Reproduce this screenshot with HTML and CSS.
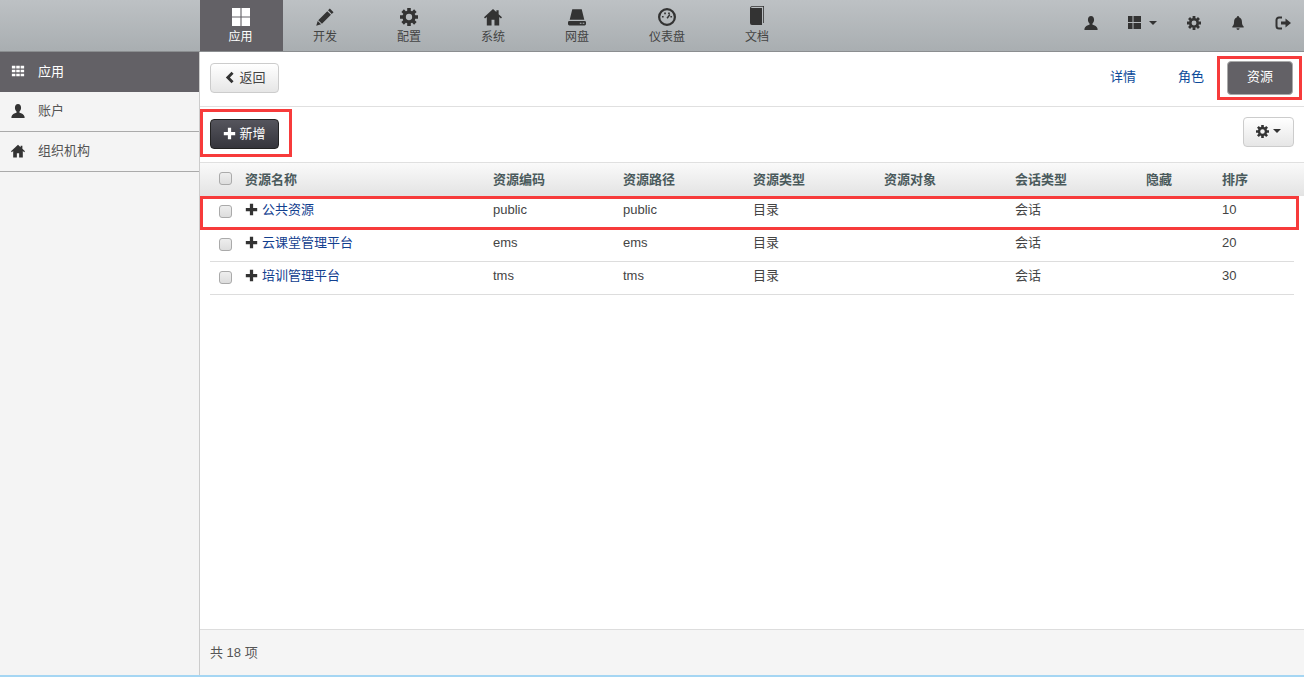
FILE: index.html
```html
<!DOCTYPE html>
<html lang="zh-CN">
<head>
    <meta charset="UTF-8">
    <title>资源</title>
    <link rel="stylesheet" href="styles.css">
</head>
<body>
    <!-- icon sprites -->
    <svg class="sprites">
        <symbol id="i-grid4" viewBox="0 0 16 16"><path d="M0 0h7.500v7.500H0zM8.500 0H16v7.500H8.500zM0 8.500h7.500V16H0zM8.500 8.500H16V16H8.500z"/></symbol>
        <symbol id="i-panels" viewBox="0 0 13 13"><path d="M0 0h4.500v6H0zM0 7h4.500v6H0zM5.500 0H13v6H5.500zM5.500 7H13v6H5.500z"/></symbol>
        <symbol id="i-grid9" viewBox="0 0 16 16"><path d="M1 2h4v3H1zM6 2h4v3H6zM11 2h4v3h-4zM1 6.500h4v3H1zM6 6.500h4v3H6zM11 6.500h4v3h-4zM1 11h4v3H1zM6 11h4v3H6zM11 11h4v3h-4z"/></symbol>
        <symbol id="i-pencil" viewBox="0 0 16 16"><path d="M12.300.4l3.300 3.300-1.600 1.600-3.300-3.300zM10 2.800l3.300 3.300-8 8L2 10.800zM1.500 11.500l3 3L.2 15.800z"/></symbol>
        <symbol id="i-gear" viewBox="0 0 16 16">
            <circle cx="8" cy="8" r="4.300" fill="none" stroke="currentColor" stroke-width="3"/>
            <path d="M6.400 0h3.200v3H6.400zM6.400 13h3.200v3H6.400zM0 6.400h3v3.200H0zM13 6.400h3v3.200h-3z"/>
            <path transform="rotate(45 8 8)" d="M6.400 0h3.200v3H6.400zM6.400 13h3.200v3H6.400zM0 6.400h3v3.200H0zM13 6.400h3v3.200h-3z"/>
        </symbol>
        <symbol id="i-home" viewBox="0 0 16 16"><path d="M8 .8L0 8.300l.9 1 1.600-1.400V15.500h4.200V10.500h2.600v5h4.200V7.900l1.600 1.400.9-1-3-2.800V2h-2v1.600z"/></symbol>
        <symbol id="i-hdd" viewBox="0 0 16 16"><path d="M3.800 1h8.400l2.300 9.500h-13zM1.200 11.500h13.600a1.200 1.200 0 0 1 1.200 1.200v1.600a1.200 1.200 0 0 1-1.200 1.200H1.200A1.200 1.200 0 0 1 0 14.300v-1.600a1.200 1.200 0 0 1 1.200-1.200zM10.500 13v1h1.500v-1zM13 13v1h1.500v-1z" fill-rule="evenodd"/></symbol>
        <symbol id="i-dash" viewBox="0 0 16 16">
            <circle cx="8" cy="8" r="7" fill="none" stroke="currentColor" stroke-width="2"/>
            <path d="M3.500 7h1.500v1.500H3.500zM5.500 4h1.500v1.500H5.500zM9 4h1.500v1.500H9zM11 7h1.500v1.500H11zM10 5.500l1 .7-2.300 3.300-1.200-.8z"/>
        </symbol>
        <symbol id="i-book" viewBox="0 0 16 20"><path d="M1 3.500A2.500 2.500 0 0 1 3.500 1H15v17h-.8V1.800H3.500A1.700 1.700 0 0 0 2 3H13v17H3a2 2 0 0 1-2-2z"/></symbol>
        <symbol id="i-user" viewBox="0 0 16 16"><path d="M8 0c2.200 0 3.500 1.800 3.500 4.200 0 1.900-.9 3.400-1.800 4.300v1.500c2.500.8 5.300 1.700 5.800 4.500V16H.5v-1.500c.5-2.800 3.300-3.700 5.800-4.500V8.500C5.400 7.600 4.500 6.100 4.500 4.200 4.500 1.800 5.800 0 8 0z"/></symbol>
        <symbol id="i-bell" viewBox="0 0 16 16"><path d="M8 0a1.200 1.200 0 0 1 1.200 1.300C11.500 2 12.500 4 12.500 6.500c0 3 .8 4.500 2 5.500v1h-13v-1c1.200-1 2-2.500 2-5.500C3.500 4 4.500 2 6.800 1.300A1.200 1.200 0 0 1 8 0zM6.300 14h3.400A1.800 1.800 0 0 1 8 16a1.800 1.800 0 0 1-1.700-2z"/></symbol>
        <symbol id="i-logout" viewBox="0 0 16 16">
            <path d="M7 2.500H4a2.500 2.500 0 0 0-2.500 2.500v6A2.500 2.500 0 0 0 4 13.500h3" fill="none" stroke="currentColor" stroke-width="2"/>
            <path d="M6 6.500h4.500v-3L16 8l-5.500 4.500v-3H6z"/>
        </symbol>
        <symbol id="i-plus" viewBox="0 0 16 16"><path d="M6 1h4v5h5v4h-5v5H6v-5H1V6h5z"/></symbol>
        <symbol id="i-back" viewBox="0 0 16 16"><path d="M10.500 1l2.500 2.500L8.500 8l4.500 4.500-2.500 2.500-7-7z"/></symbol>
    </svg>

    <header class="topbar">
        <nav class="topnav">
            <a class="topnav-item active"><svg class="nav-icon"><use href="#i-grid4"/></svg>应用</a>
            <a class="topnav-item"><svg class="nav-icon"><use href="#i-pencil"/></svg>开发</a>
            <a class="topnav-item"><svg class="nav-icon"><use href="#i-gear"/></svg>配置</a>
            <a class="topnav-item"><svg class="nav-icon"><use href="#i-home"/></svg>系统</a>
            <a class="topnav-item"><svg class="nav-icon"><use href="#i-hdd"/></svg>网盘</a>
            <a class="topnav-item"><svg class="nav-icon"><use href="#i-dash"/></svg>仪表盘</a>
            <a class="topnav-item"><svg class="nav-icon book"><use href="#i-book"/></svg>文档</a>
        </nav>
        <div class="topbar-right">
            <svg class="tool-icon"><use href="#i-user"/></svg>
            <span class="tool-group"><svg class="tool-icon"><use href="#i-panels"/></svg><i class="caret"></i></span>
            <svg class="tool-icon"><use href="#i-gear"/></svg>
            <svg class="tool-icon"><use href="#i-bell"/></svg>
            <svg class="tool-icon wide"><use href="#i-logout"/></svg>
        </div>
    </header>

    <div class="layout">
        <aside class="sidebar">
            <a class="side-item active"><svg class="side-icon"><use href="#i-grid9"/></svg><span class="cn">应用</span></a>
            <a class="side-item"><svg class="side-icon"><use href="#i-user"/></svg><span class="cn">账户</span></a>
            <a class="side-item"><svg class="side-icon"><use href="#i-home"/></svg><span class="cn">组织机构</span></a>
        </aside>

        <main class="content">
            <div class="toolbar-top">
                <button class="btn"><svg class="btn-icon"><use href="#i-back"/></svg><span class="cn">返回</span></button>
                <div class="tabs">
                    <a class="tab">详情</a>
                    <a class="tab">角色</a>
                    <a class="tab active">资源</a>
                    <span class="mark mark-tab"></span>
                </div>
            </div>

            <div class="toolbar-actions">
                <button class="btn btn-dark"><svg class="btn-icon"><use href="#i-plus"/></svg><span class="cn">新增</span></button>
                <span class="mark mark-add"></span>
                <button class="btn btn-gear"><svg class="btn-icon"><use href="#i-gear"/></svg><i class="caret"></i></button>
            </div>

            <div class="table">
                <div class="row head">
                    <span><input type="checkbox" class="check"></span>
                    <span>资源名称</span>
                    <span>资源编码</span>
                    <span>资源路径</span>
                    <span>资源类型</span>
                    <span>资源对象</span>
                    <span>会话类型</span>
                    <span>隐藏</span>
                    <span>排序</span>
                </div>
                <div class="row">
                    <span><input type="checkbox" class="check"></span>
                    <span class="name"><svg class="row-icon"><use href="#i-plus"/></svg><a class="cn">公共资源</a></span>
                    <span>public</span>
                    <span>public</span>
                    <span class="cn">目录</span>
                    <span></span>
                    <span class="cn">会话</span>
                    <span></span>
                    <span>10</span>
                    <span class="mark mark-row"></span>
                </div>
                <div class="row">
                    <span><input type="checkbox" class="check"></span>
                    <span class="name"><svg class="row-icon"><use href="#i-plus"/></svg><a class="cn">云课堂管理平台</a></span>
                    <span>ems</span>
                    <span>ems</span>
                    <span class="cn">目录</span>
                    <span></span>
                    <span class="cn">会话</span>
                    <span></span>
                    <span>20</span>
                </div>
                <div class="row">
                    <span><input type="checkbox" class="check"></span>
                    <span class="name"><svg class="row-icon"><use href="#i-plus"/></svg><a class="cn">培训管理平台</a></span>
                    <span>tms</span>
                    <span>tms</span>
                    <span class="cn">目录</span>
                    <span></span>
                    <span class="cn">会话</span>
                    <span></span>
                    <span>30</span>
                </div>
            </div>

            <footer class="pager">共 18 项</footer>
        </main>
    </div>
</body>
</html>
```

FILE: styles.css
```css
* {
    box-sizing: border-box;
}

html, body {
    height: 100%;
}

body {
    margin: 0;
    display: flex;
    flex-direction: column;
    overflow: hidden;
    font-family: 'Liberation Sans', 'Noto Sans CJK SC', sans-serif;
    font-size: 13px;
    color: #444;
    background-color: #fff;
    border-bottom: 2px solid #a5d6f3;
}

.sprites {
    display: none;
}

svg {
    fill: currentColor;
}

a {
    text-decoration: none;
}

/* CJK glyphs sit a little low in this font stack */
.cn {
    padding-bottom: 2px;
}

/* Top bar */
.topbar {
    height: 52px;
    flex: none;
    display: flex;
    justify-content: space-between;
    padding-left: 200px;
    color: #333;
    background: linear-gradient(#bdc1c4, #a9aeb1);
    border-bottom: 1px solid #8b8e90;
}

.topnav {
    display: flex;
}

.topnav-item {
    display: flex;
    flex-direction: column;
    align-items: center;
    padding: 8px 30px 0;
    font-size: 12px;
    line-height: 17px;
    white-space: nowrap;
    color: #444;
}

.topnav-item.active {
    width: 83px;
    padding: 8px 2px 0 0;
    color: #fff;
    background-color: #636166;
}

.nav-icon {
    width: 18px;
    height: 18px;
    margin-bottom: 3px;
    color: #333;
}

.active .nav-icon {
    color: #fff;
}

.nav-icon.book {
    height: 20px;
    margin: -3px 0 4px;
}

.topbar-right {
    display: flex;
    align-items: center;
    gap: 30px;
    padding: 0 13px 6px 0;
}

.tool-group {
    display: flex;
    align-items: center;
    gap: 8px;
}

.tool-icon {
    width: 14px;
    height: 14px;
}

.tool-group .tool-icon {
    width: 13px;
    height: 13px;
}

.tool-icon.wide {
    width: 16px;
    height: 16px;
}

.caret {
    width: 0;
    height: 0;
    border-top: 4px solid #333;
    border-left: 4px solid transparent;
    border-right: 4px solid transparent;
}

/* Sidebar */
.layout {
    flex: 1;
    min-height: 0;
    display: flex;
}

.sidebar {
    width: 200px;
    flex: none;
    background-color: #f4f4f4;
    border-right: 1px solid #ccc;
}

.side-item {
    height: 40px;
    display: flex;
    align-items: center;
    gap: 13px;
    padding: 0 0 2px 11px;
    color: #555;
    border-bottom: 1px solid #aaa;
}

.side-item.active {
    color: #fff;
    background-color: #636166;
    border-bottom: none;
}

.side-icon {
    width: 14px;
    height: 14px;
    flex: none;
    color: #333;
}

.active .side-icon {
    color: #fff;
}

/* Main area */
.content {
    flex: 1;
    min-width: 0;
    display: flex;
    flex-direction: column;
}

.toolbar-top {
    height: 55px;
    flex: none;
    display: flex;
    justify-content: space-between;
    padding: 11px 11px 0 10px;
    border-bottom: 1px solid #e0e0e0;
}

.tabs {
    position: relative;
    display: flex;
    gap: 2px;
    align-items: flex-start;
}

.tab {
    width: 66px;
    height: 34px;
    margin-top: -2px;
    line-height: 32px;
    text-align: center;
    color: #0b4a9a;
    border-radius: 4px;
}

.tab.active {
    margin-left: 1px;
    color: #fff;
    background-color: #636166;
    border: 1px solid #aaa;
    line-height: 30px;
}

.btn {
    height: 30px;
    width: 69px;
    display: flex;
    align-items: center;
    justify-content: center;
    gap: 3px;
    padding: 0 0 2px;
    font: inherit;
    color: #444;
    background: linear-gradient(#fff, #e6e6e6);
    border: 1px solid #ccc;
    border-radius: 4px;
}

.btn-icon {
    width: 13px;
    height: 13px;
    color: #333;
}

.btn-dark {
    color: #fff;
    background: linear-gradient(#55555d, #35353c);
    border-color: #222;
}

.btn-dark .btn-icon {
    color: #fff;
}

.btn-gear {
    width: 51px;
    gap: 4px;
}

.toolbar-actions {
    position: relative;
    height: 56px;
    flex: none;
    display: flex;
    justify-content: space-between;
    padding: 12px 10px 0;
    border-bottom: 1px solid #e0e0e0;
}

.toolbar-actions .btn-gear {
    margin-top: -2px;
}

/* Resource table */
.table {
    flex: 1;
    min-height: 0;
}

.row {
    position: relative;
    display: grid;
    grid-template-columns: 35px 248px 130px 130px 131px 131px 131px 76px 72px;
    align-items: center;
    height: 33px;
    margin: 0 10px;
    padding-bottom: 6px;
    border-bottom: 1px solid #ddd;
}

.row span {
    display: flex;
    align-items: center;
    white-space: nowrap;
}

.row.head {
    margin: 0;
    padding: 0 10px 3px;
    font-weight: bold;
    color: #4a5a5c;
    background: linear-gradient(#fafafa, #e3e3e3);
    border-bottom: none;
}

.check {
    appearance: none;
    width: 13px;
    height: 13px;
    margin: 5px 0 0 9px;
    background: linear-gradient(#eee, #ddd);
    border: 1px solid #aaa;
    border-radius: 3px;
}

.head .check {
    margin-top: 1px;
}

.name a {
    color: #12408f;
}

.row-icon {
    width: 13px;
    height: 13px;
    margin-right: 4px;
    color: #333;
}

.pager {
    height: 46px;
    flex: none;
    display: flex;
    align-items: center;
    padding: 0 0 2px 10px;
    color: #555;
    background-color: #f5f5f5;
    border-top: 1px solid #ddd;
}

/* Red annotation frames drawn over the screenshot */
.row span.mark,
.mark {
    position: absolute;
    display: block;
    border: 3px solid #f73b3b;
    pointer-events: none;
}

.mark-tab {
    top: -7px;
    right: -9px;
    width: 85px;
    height: 44px;
}

.mark-add {
    top: 2px;
    left: 0;
    width: 92px;
    height: 48px;
}

.row span.mark-row {
    top: 0;
    left: -10px;
    width: 1099px;
    height: 34px;
}
```
